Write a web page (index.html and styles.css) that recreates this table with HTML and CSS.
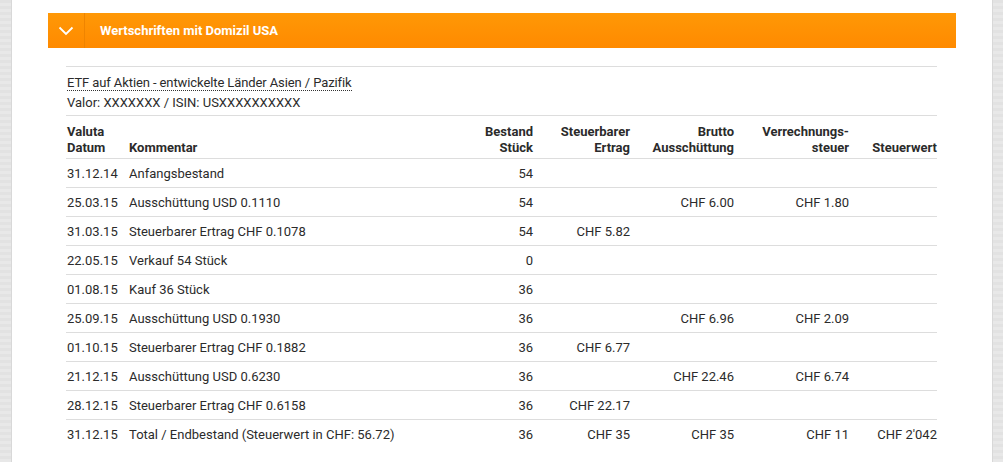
FILE: index.html
```html
<!DOCTYPE html>
<html lang="de">
<head>
<meta charset="utf-8">
<title>Wertschriften mit Domizil USA</title>
<link rel="stylesheet" href="styles.css">
</head>
<body>
<div class="page">
  <div class="side side-left"></div>
  <main class="main">
    <div class="bar">
      <div class="bar-toggle">
        <svg width="16" height="10" viewBox="0 0 16 10"><path d="M1.5 1.5 L8 8 L14.5 1.5" fill="none" stroke="#fff" stroke-width="1.8"/></svg>
      </div>
      <div class="bar-title">Wertschriften mit Domizil USA</div>
    </div>
    <div class="content">
      <div class="security">
        <div><span class="sec-name">ETF auf Aktien - entwickelte Länder Asien / Pazifik</span></div>
        <div>Valor: XXXXXXX / ISIN: USXXXXXXXXXX</div>
      </div>
      <table class="tbl">
        <colgroup>
          <col class="c1"><col class="c2"><col class="c3"><col class="c4"><col class="c5"><col class="c6"><col class="c7">
        </colgroup>
        <thead>
          <tr>
            <th class="l">Valuta<br>Datum</th>
            <th class="l">Kommentar</th>
            <th class="r">Bestand<br>Stück</th>
            <th class="r">Steuerbarer<br>Ertrag</th>
            <th class="r">Brutto<br>Ausschüttung</th>
            <th class="r">Verrechnungs-<br>steuer</th>
            <th class="r">Steuerwert</th>
          </tr>
        </thead>
        <tbody>
          <tr><td>31.12.14</td><td>Anfangsbestand</td><td class="r">54</td><td class="r"></td><td class="r"></td><td class="r"></td><td class="r"></td></tr>
          <tr><td>25.03.15</td><td>Ausschüttung USD 0.1110</td><td class="r">54</td><td class="r"></td><td class="r">CHF 6.00</td><td class="r">CHF 1.80</td><td class="r"></td></tr>
          <tr><td>31.03.15</td><td>Steuerbarer Ertrag CHF 0.1078</td><td class="r">54</td><td class="r">CHF 5.82</td><td class="r"></td><td class="r"></td><td class="r"></td></tr>
          <tr><td>22.05.15</td><td>Verkauf 54 Stück</td><td class="r">0</td><td class="r"></td><td class="r"></td><td class="r"></td><td class="r"></td></tr>
          <tr><td>01.08.15</td><td>Kauf 36 Stück</td><td class="r">36</td><td class="r"></td><td class="r"></td><td class="r"></td><td class="r"></td></tr>
          <tr><td>25.09.15</td><td>Ausschüttung USD 0.1930</td><td class="r">36</td><td class="r"></td><td class="r">CHF 6.96</td><td class="r">CHF 2.09</td><td class="r"></td></tr>
          <tr><td>01.10.15</td><td>Steuerbarer Ertrag CHF 0.1882</td><td class="r">36</td><td class="r">CHF 6.77</td><td class="r"></td><td class="r"></td><td class="r"></td></tr>
          <tr><td>21.12.15</td><td>Ausschüttung USD 0.6230</td><td class="r">36</td><td class="r"></td><td class="r">CHF 22.46</td><td class="r">CHF 6.74</td><td class="r"></td></tr>
          <tr><td>28.12.15</td><td>Steuerbarer Ertrag CHF 0.6158</td><td class="r">36</td><td class="r">CHF 22.17</td><td class="r"></td><td class="r"></td><td class="r"></td></tr>
          <tr class="last"><td>31.12.15</td><td>Total / Endbestand (Steuerwert in CHF: 56.72)</td><td class="r">36</td><td class="r">CHF 35</td><td class="r">CHF 35</td><td class="r">CHF 11</td><td class="r">CHF 2'042</td></tr>
        </tbody>
      </table>
    </div>
  </main>
  <div class="side side-right"></div>
</div>
</body>
</html>
```

FILE: styles.css
```css
html, body {
  margin: 0;
  padding: 0;
  background: #ffffff;
}

body {
  font-family: Roboto, "Liberation Sans", sans-serif;
  font-size: 13px;
  color: #2b2b2b;
}

.page {
  display: flex;
  min-height: 462px;
}

.side {
  flex: none;
  background: repeating-linear-gradient(180deg, #e2e2e2 0, #e2e2e2 3px, #e8e8e8 3px, #e8e8e8 6px);
}

.side-left {
  width: 12px;
  box-shadow: inset -1px 0 0 #d8d8d8;
}

.side-right {
  width: 11px;
  box-shadow: inset 1px 0 0 #d8d8d8;
}

.main {
  flex: 1;
  padding: 13px 36px 0 36px;
  background: #ffffff;
}

.bar {
  display: flex;
  align-items: stretch;
  height: 35px;
  background: linear-gradient(180deg, #ff9806 0%, #ff8a00 100%);
  color: #ffffff;
}

.bar-toggle {
  width: 36px;
  flex: none;
  display: flex;
  align-items: center;
  justify-content: center;
  border-right: 1px solid #ef8400;
}

.bar-toggle svg {
  display: block;
}

.bar-title {
  display: flex;
  align-items: center;
  padding-left: 15px;
  font-weight: 700;
  font-size: 13px;
}

.content {
  padding: 18px 19px 0 18px;
}

.security {
  border-top: 1px solid #dddddd;
  border-bottom: 1px solid #dddddd;
  padding: 6px 0 2px 1px;
  line-height: 20px;
}

.sec-name {
  border-bottom: 1px dotted #333333;
  letter-spacing: -0.1px;
}

.tbl {
  width: 100%;
  table-layout: fixed;
  border-collapse: collapse;
}

.c1 { width: 63px; }
.c2 { width: 344px; }
.c3 { width: 60px; }
.c4 { width: 97px; }
.c5 { width: 104px; }
.c6 { width: 115px; }
.c7 { width: 88px; }

.tbl th {
  font-weight: 700;
  line-height: 16px;
  padding: 8px 0 2px 0;
  vertical-align: bottom;
  border-bottom: 1px solid #dddddd;
}

.tbl td {
  height: 26px;
  padding: 2px 0 0 0;
  line-height: 16px;
  vertical-align: middle;
  border-bottom: 1px solid #dddddd;
  white-space: nowrap;
}

.tbl tr.last td {
  border-bottom: none;
}

.tbl th:first-child,
.tbl td:first-child {
  padding-left: 1px;
}

.l { text-align: left; }
.r { text-align: right; }
```
